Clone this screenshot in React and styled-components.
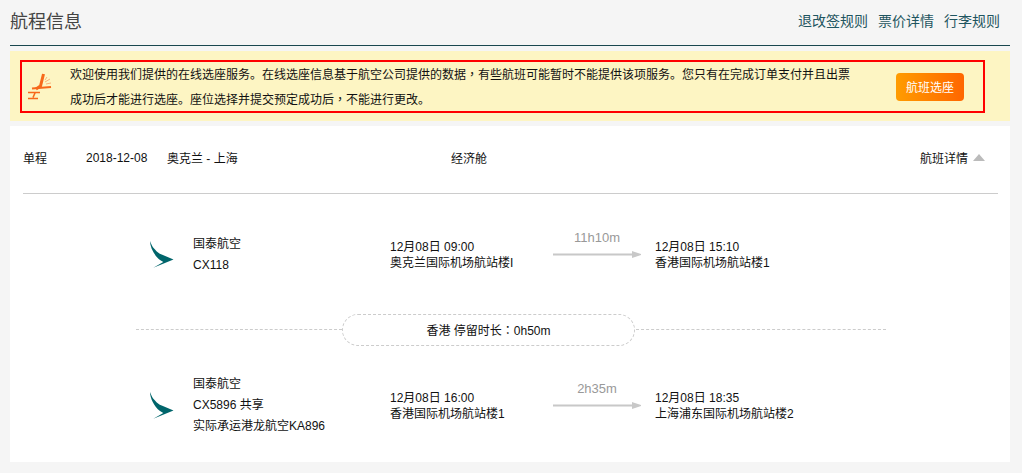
import React from "react";
import styled, { createGlobalStyle } from "styled-components";

const GlobalStyle = createGlobalStyle`
  html, body {
    margin: 0;
    padding: 0;
    height: 473px;
    overflow: hidden;
    background: #f5f5f5;
    font-family: "Liberation Sans", "Noto Sans CJK SC", sans-serif;
    font-size: 12px;
    color: #111;
  }
`;
const Page = styled.div`
  width: 1000px;
  margin-left: 10px;
`;
const Header = styled.div`
  height: 45px;
  display: flex;
  justify-content: space-between;
  border-bottom: 1px solid #19474f;
`;
const Title = styled.h2`
  margin: 10px 0 0;
  font-size: 18px;
  line-height: 24px;
  font-weight: 400;
  color: #444;
`;
const RuleLinks = styled.div`
  display: flex;
  gap: 10px;
  margin: 12px 10px 0 0;
  line-height: 18px;
  font-size: 14px;
  color: #1f5560;
`;
const Notice = styled.div`
  height: 70px;
  margin-top: 5px;
  padding: 9px 25px 0 10px;
  background: #fdf5c3;
  box-sizing: border-box;
`;
const NoticeBox = styled.div`
  height: 53px;
  box-sizing: border-box;
  border: 2px solid #f00;
  display: flex;
  align-items: center;
  padding-left: 5px;
`;
const SeatIcon = styled.svg`
  flex: none;
  width: 26px;
  height: 28px;
  margin-right: 17px;
`;
const NoticeText = styled.div`
  width: 784px;
  font-size: 12px;
  line-height: 24px;
`;
const NoticeLine = styled.div`
  white-space: nowrap;
`;
const Wide = styled.span`
  font-family: "Noto Sans CJK TC", sans-serif;
`;
const SeatButton = styled.button`
  width: 68px;
  height: 28px;
  margin-left: 42px;
  padding: 0;
  border: none;
  border-radius: 4px;
  background: linear-gradient(90deg, #ff9c00, #ff6600);
  color: #fff;
  font: inherit;
`;
const Card = styled.section`
  height: 336px;
  margin-top: 5px;
  background: #fff;
  padding: 0 12px 0 13px;
  box-sizing: border-box;
`;
const TripRow = styled.div`
  height: 68px;
  display: flex;
  align-items: center;
  padding-bottom: 4px;
  box-sizing: border-box;
  border-bottom: 1px solid #ccc;
`;
const TripType = styled.span`
  width: 63px;
`;
const TripDate = styled.span`
  width: 81px;
`;
const TripCities = styled.span`
  width: 284px;
`;
const TripCabin = styled.span`
  flex: 1;
`;
const Details = styled.span`
  display: flex;
  align-items: center;
  gap: 5px;
  margin-right: 13px;
`;
const Triangle = styled.i`
  width: 0;
  height: 0;
  border: 6px solid transparent;
  border-top: 0;
  border-bottom: 7px solid #bbb;
`;
const Segment = styled.div`
  display: flex;
  margin-left: 126px;
  height: ${(p) => p.$height}px;
  padding-top: ${(p) => p.$top}px;
  box-sizing: border-box;
`;
const TailIcon = styled.svg`
  flex: none;
  width: 26px;
  height: 30px;
  margin-top: ${(p) => p.$offset}px;
  margin-right: 18px;
`;
const Airline = styled.div`
  width: 197px;
  line-height: 21px;
`;
const Stop = styled.div`
  width: 163px;
  line-height: 16px;
  padding-top: ${(p) => p.$offset}px;
`;
const Duration = styled.div`
  width: 88px;
  margin-right: 14px;
  text-align: center;
  color: #999;
  font-size: 13px;
  line-height: 16px;
  margin-top: ${(p) => p.$offset}px;
`;
const Arrow = styled.svg`
  display: block;
  width: 88px;
  height: 9px;
  margin-top: 4px;
`;
const Layover = styled.div`
  display: flex;
  align-items: center;
  margin: 0 112px 0 113px;
  height: 32px;
`;
const DashLine = styled.div`
  flex: ${(p) => (p.$width ? "none" : 1)};
  width: ${(p) => p.$width || 0}px;
  margin-bottom: 2px;
  border-top: 1px dashed #ccc;
`;
const LayoverPill = styled.div`
  flex: none;
  width: 293px;
  height: 32px;
  box-sizing: border-box;
  border: 1px dashed #ccc;
  border-radius: 16px;
  margin: 0 1px 0 0;
  text-align: center;
  line-height: 30px;
`;

const Seat = () => (
  <SeatIcon viewBox="0 0 26 28" fill="none">
    <path d="M16.5 1 L13.5 13 L9 16" stroke="#f7681a" strokeWidth="3" />
    <path d="M5 15.5 L24 14" stroke="#f7681a" strokeWidth="1.8" />
    <path d="M1 19.5 H13 M8 20 L6 24.5 M1 25.5 H11" stroke="#f7681a" strokeWidth="1.6" />
    <path d="M18 9 L23 6 M19 11 L24 10 M18 7 L20 4" stroke="#f9b27a" strokeWidth="1" />
  </SeatIcon>
);

const Tail = ({ offset }) => (
  <TailIcon $offset={offset} viewBox="0 0 26 30">
    <path d="M1 1 C2.5 5 4 8 6 9.5 C8 12 10 13.5 12.7 14.5 L24.5 19.5 L4.3 27.7 L14.3 22 L11 20 C5 15.5 1 7 1 1 Z" fill="#00656b" />
  </TailIcon>
);

const Flight = ({ height, top, iconOffset, lines, from, to, duration, stopOffset, durationOffset }) => (
  <Segment $height={height} $top={top}>
    <Tail offset={iconOffset} />
    <Airline>
      {lines.map((l) => (
        <div key={l}>{l}</div>
      ))}
    </Airline>
    <Stop $offset={stopOffset}>
      <div>{from[0]}</div>
      <div>{from[1]}</div>
    </Stop>
    <Duration $offset={durationOffset}>
      {duration}
      <Arrow viewBox="0 0 88 9">
        <path d="M0 4.5 H84 M80 2.5 L86 4.5 L80 6.5 Z" stroke="#c8c8c8" strokeWidth="2" fill="#c8c8c8" />
      </Arrow>
    </Duration>
    <Stop $offset={stopOffset}>
      <div>{to[0]}</div>
      <div>{to[1]}</div>
    </Stop>
  </Segment>
);

export default function App() {
  return (
    <Page>
      <GlobalStyle />
      <Header>
        <Title>航程信息</Title>
        <RuleLinks>
          <span>退改签规则</span>
          <span>票价详情</span>
          <span>行李规则</span>
        </RuleLinks>
      </Header>
      <Notice>
        <NoticeBox>
          <Seat />
          <NoticeText>
            <NoticeLine>
              欢迎使用我们提供的在线选座服务。在线选座信息基于航空公司提供的数据<Wide>，</Wide>有些航班可能暂时不能提供该项服务。您只有在完成订单支付并且出票
            </NoticeLine>
            <NoticeLine>
              成功后才能进行选座。座位选择并提交预定成功后<Wide>，</Wide>不能进行更改。
            </NoticeLine>
          </NoticeText>
          <SeatButton>航班选座</SeatButton>
        </NoticeBox>
      </Notice>
      <Card>
        <TripRow>
          <TripType>单程</TripType>
          <TripDate>2018-12-08</TripDate>
          <TripCities>奥克兰 - 上海</TripCities>
          <TripCabin>经济舱</TripCabin>
          <Details>
            航班详情
            <Triangle />
          </Details>
        </TripRow>
        <Flight
          height={120}
          top={40}
          iconOffset={6}
          lines={["国泰航空", "CX118"]}
          from={["12月08日 09:00", "奥克兰国际机场航站楼I"]}
          to={["12月08日 15:10", "香港国际机场航站楼1"]}
          duration="11h10m"
          stopOffset={5}
          durationOffset={-4}
        />
        <Layover>
          <DashLine $width={206} />
          <LayoverPill>
            香港 停留时长<Wide>：</Wide>0h50m
          </LayoverPill>
          <DashLine />
        </Layover>
        <Flight
          height={115}
          top={28}
          iconOffset={17}
          lines={["国泰航空", "CX5896 共享", "实际承运港龙航空KA896"]}
          from={["12月08日 16:00", "香港国际机场航站楼1"]}
          to={["12月08日 18:35", "上海浦东国际机场航站楼2"]}
          duration="2h35m"
          stopOffset={16}
          durationOffset={7}
        />
      </Card>
    </Page>
  );
}
